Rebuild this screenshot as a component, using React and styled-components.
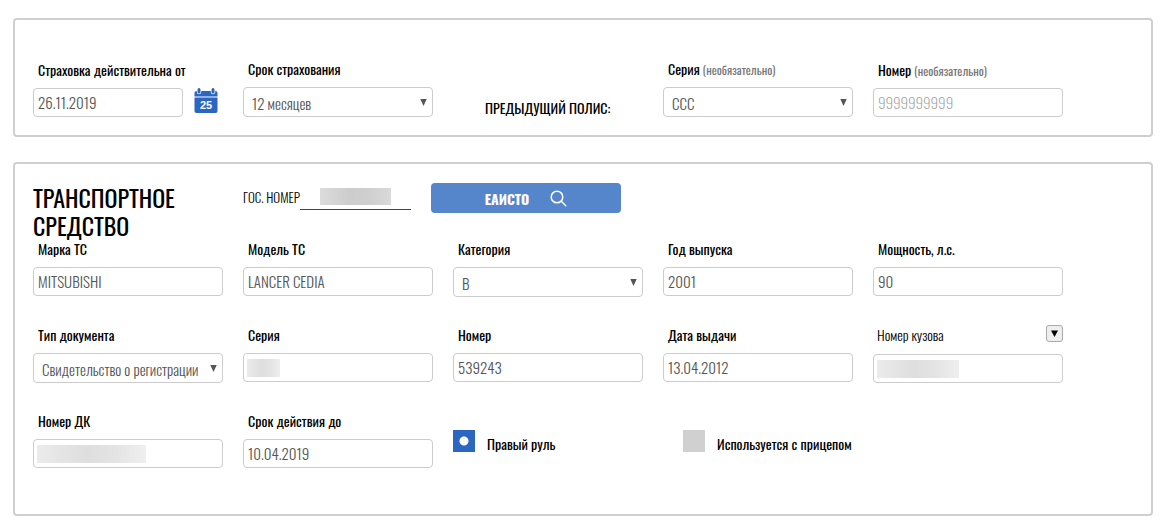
import React from "react";
import styled, { createGlobalStyle } from "styled-components";

const GlobalStyle = createGlobalStyle`
  *, *::before, *::after { box-sizing: border-box; }
  body { margin: 0; background: #fff; }
  body, input, select, button {
    font-family: Oswald, "Liberation Sans Narrow", "Roboto Condensed", "Liberation Sans", sans-serif;
  }
`;

const Page = styled.main`
  display: flex;
  flex-direction: column;
  gap: 25px;
  padding: 18px 15px 12px 13px;
  color: #000;
`;

const Panel = styled.section`
  border: 2px solid #cfcfcf;
  border-radius: 4px;
  padding: ${({ $padding }) => $padding};
`;

const FieldGrid = styled.div`
  display: grid;
  grid-template-columns: repeat(5, minmax(0, 190px));
  column-gap: 20px;
  row-gap: 28px;
  align-items: ${({ $align }) => $align || "start"};
`;

const FieldBox = styled.div`
  display: flex;
  flex-direction: column;
  gap: 8px;
  min-width: 0;
`;

const Label = styled.label`
  height: 20px;
  padding-left: ${({ $soft }) => ($soft ? 4 : 5)}px;
  font-size: 14px;
  font-weight: ${({ $soft }) => ($soft ? 300 : 400)};
  line-height: 20px;
  white-space: nowrap;
  color: #000;
`;

const Hint = styled.small`
  font-size: 12px;
  line-height: 12px;
  color: #777;
`;

const TextInput = styled.input`
  width: 100%;
  min-width: 0;
  height: 29px;
  padding: 0 4px 2px;
  border: 1px solid #ccc;
  border-radius: 4px;
  background: #fff;
  font-size: 15px;
  font-weight: 300;
  color: #555;
  &::placeholder { color: #999; opacity: 1; font-weight: 200; }
`;

const MaskedInput = styled(TextInput)`
  background: linear-gradient(90deg, #ebebeb, #dedede 45%, #e3e3e3 70%, #efefef) 3px 5px / ${({ $mask }) => $mask}px 18px no-repeat #fff;
`;

const SelectFrame = styled.div`
  display: grid;
  align-items: center;
  & > * { grid-area: 1 / 1; }
`;

const SelectBox = styled.select`
  appearance: none;
  width: 100%;
  height: 30px;
  padding: 2px 18px 0 8px;
  border: 1px solid #ccc;
  border-radius: 4px;
  background: #fff;
  font-size: 15px;
  font-weight: 300;
  color: #555;
`;

const Arrow = styled.svg`
  justify-self: end;
  margin-right: 6px;
  pointer-events: none;
`;

const DateRow = styled.div`
  display: grid;
  grid-template-columns: minmax(0, 150px) 24px;
  column-gap: 11px;
`;

const IconButton = styled.button`
  display: flex;
  align-items: flex-start;
  height: 29px;
  padding: 0;
  border: 0;
  background: none;
  cursor: pointer;
`;

const GroupTitle = styled.p`
  margin: 0;
  padding-left: 32px;
  font-size: 14px;
  line-height: 18px;
  white-space: nowrap;
`;

const PanelHead = styled.header`
  display: grid;
  grid-template-columns: minmax(0, 190px) minmax(0, 168px) minmax(0, 190px);
  column-gap: 20px;
  align-items: start;
`;

const Title = styled.h2`
  margin: 0;
  font-size: 24px;
  line-height: 28px;
  font-weight: 400;
  color: #000;
`;

const PlateRow = styled.div`
  display: flex;
  height: 27px;
  align-items: stretch;
`;

const PlateLabel = styled.label`
  font-size: 13px;
  font-weight: 300;
  line-height: 28px;
  white-space: nowrap;
  color: #000;
`;

const PlateInput = styled.input`
  flex: 1;
  min-width: 0;
  border: 0;
  border-bottom: 1px solid #444;
  background: linear-gradient(90deg, #dcdcdc, #cdcdcd 40%, #cfcfcf 70%, #dadada) 20px 5px / 71px 17px no-repeat;
`;

const SearchButton = styled.button`
  display: flex;
  align-items: center;
  justify-content: center;
  gap: 21px;
  height: 30px;
  border: 0;
  border-radius: 4px;
  background: #5586cc;
  color: #fff;
  font-size: 14px;
  font-weight: 700;
  cursor: pointer;
`;

const LabelRow = styled.div`
  display: flex;
  justify-content: space-between;
  height: 21px;
`;

const ToggleButton = styled.button`
  display: flex;
  align-items: center;
  justify-content: center;
  width: 17px;
  height: 17px;
  padding: 0;
  border: 1px solid #aaa;
  border-radius: 3px;
  background: #eee;
`;

const CheckRow = styled.div`
  display: flex;
  gap: 12px;
  padding: 19px 0 0 ${({ $indent }) => $indent || 0}px;
`;

const CheckLabel = styled.label`
  font-size: 14px;
  line-height: 28px;
  white-space: nowrap;
`;

const CheckBox = styled.input`
  appearance: none;
  flex: none;
  width: 22px;
  height: 22px;
  margin: 0;
  background: #d0d0d0;
  &:checked { background: radial-gradient(circle, #fff 4px, #2b66c0 5px); }
`;

const Triangle = () => (
  <Arrow width="7" height="7" viewBox="0 0 7 7" aria-hidden="true">
    <path d="M0.3 0h6.4L3.5 7z" fill="#555" />
  </Arrow>
);

const CalendarIcon = () => (
  <svg width="24" height="26" viewBox="0 0 24 26" aria-hidden="true">
    <path d="M0.5 8.5V5q0-2 2-2h19q2 0 2 2v3.5z" fill="#2b66c0" />
    <path d="M0.5 9.5h23V23q0 2-2 2h-19q-2 0-2-2z" fill="#2b66c0" />
    <path d="M5 1.5v2.5M19 1.5v2.5" stroke="#fff" strokeWidth="4.5" strokeLinecap="round" />
    <path d="M5 1.5v2.5M19 1.5v2.5" stroke="#2b66c0" strokeWidth="3" strokeLinecap="round" />
    <text x="12" y="21" textAnchor="middle" fontFamily="Liberation Sans, sans-serif" fontWeight="700" fontSize="11" fill="#fff">25</text>
  </svg>
);

const SearchIcon = () => (
  <svg width="17" height="17" viewBox="0 0 17 17" fill="none" stroke="#fff" strokeWidth="1.5" strokeLinecap="round" aria-hidden="true">
    <circle cx="7" cy="7" r="5.8" />
    <path d="M11.3 11.3L15.8 15.8" />
  </svg>
);

function Field({ id, label, hint, mask, options, ...rest }) {
  return (
    <FieldBox>
      <Label htmlFor={id}>
        {label}
        {hint && <Hint> ({hint})</Hint>}
      </Label>
      {options ? (
        <SelectFrame>
          <SelectBox id={id}>
            {options.map((option) => <option key={option}>{option}</option>)}
          </SelectBox>
          <Triangle />
        </SelectFrame>
      ) : mask ? (
        <MaskedInput id={id} $mask={mask} />
      ) : (
        <TextInput id={id} {...rest} />
      )}
    </FieldBox>
  );
}

export default function App() {
  return (
    <>
      <GlobalStyle />
      <Page>
        <Panel $padding="39px 18px 18px">
          <FieldGrid $align="end">
            <FieldBox>
              <Label htmlFor="start">Страховка действительна от</Label>
              <DateRow>
                <TextInput id="start" defaultValue="26.11.2019" />
                <IconButton type="button" aria-label="Выбрать дату"><CalendarIcon /></IconButton>
              </DateRow>
            </FieldBox>
            <Field id="term" label="Срок страхования" options={["12 месяцев"]} />
            <GroupTitle>ПРЕДЫДУЩИЙ ПОЛИС:</GroupTitle>
            <Field id="prev-series" label="Серия" hint="необязательно" options={["ССС"]} />
            <Field id="prev-number" label="Номер" hint="необязательно" placeholder="9999999999" />
          </FieldGrid>
        </Panel>

        <Panel $padding="19px 18px 46px">
          <PanelHead>
            <Title>ТРАНСПОРТНОЕ СРЕДСТВО</Title>
            <PlateRow>
              <PlateLabel htmlFor="plate">ГОС. НОМЕР</PlateLabel>
              <PlateInput id="plate" />
            </PlateRow>
            <SearchButton type="button">ЕАИСТО<SearchIcon /></SearchButton>
          </PanelHead>
          <FieldGrid>
            <Field id="make" label="Марка ТС" defaultValue="MITSUBISHI" />
            <Field id="model" label="Модель ТС" defaultValue="LANCER CEDIA" />
            <Field id="category" label="Категория" options={["B"]} />
            <Field id="year" label="Год выпуска" defaultValue="2001" />
            <Field id="power" label="Мощность, л.с." defaultValue="90" />

            <Field id="doc-type" label="Тип документа" options={["Свидетельство о регистрации"]} />
            <Field id="doc-series" label="Серия" mask={33} />
            <Field id="doc-number" label="Номер" defaultValue="539243" />
            <Field id="doc-date" label="Дата выдачи" defaultValue="13.04.2012" />
            <FieldBox>
              <LabelRow>
                <Label htmlFor="body" $soft>Номер кузова</Label>
                <ToggleButton type="button" aria-label="Выбрать тип номера">
                  <svg width="7" height="7" viewBox="0 0 7 7" aria-hidden="true"><path d="M0 0.5h7L3.5 7z" /></svg>
                </ToggleButton>
              </LabelRow>
              <MaskedInput id="body" $mask={82} />
            </FieldBox>

            <Field id="card" label="Номер ДК" mask={109} />
            <Field id="card-until" label="Срок действия до" defaultValue="10.04.2019" />
            <CheckRow>
              <CheckBox id="right-hand" type="checkbox" defaultChecked />
              <CheckLabel htmlFor="right-hand">Правый руль</CheckLabel>
            </CheckRow>
            <CheckRow $indent={20}>
              <CheckBox id="trailer" type="checkbox" />
              <CheckLabel htmlFor="trailer">Используется с прицепом</CheckLabel>
            </CheckRow>
          </FieldGrid>
        </Panel>
      </Page>
    </>
  );
}
